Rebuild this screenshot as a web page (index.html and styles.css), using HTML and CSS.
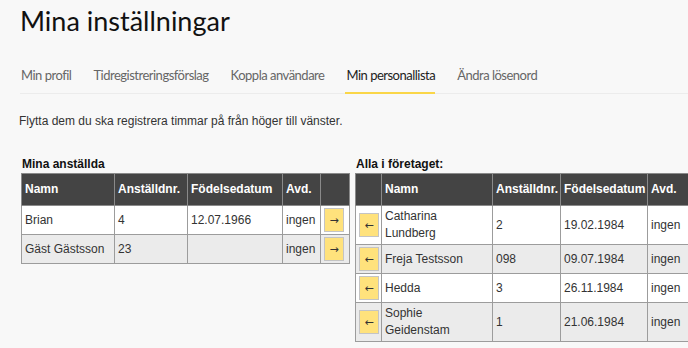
FILE: index.html
```html
<!DOCTYPE html>
<html lang="sv">
<head>
  <meta charset="UTF-8">
  <meta name="viewport" content="width=device-width, initial-scale=1.0">
  <title>Mina inställningar</title>
  <link rel="stylesheet" href="styles.css">
</head>
<body>
  <div class="page">
    <h1>Mina inställningar</h1>

    <nav class="tabs">
      <a href="#">Min profil</a>
      <a href="#">Tidregistreringsförslag</a>
      <a href="#">Koppla användare</a>
      <a href="#" class="active">Min personallista</a>
      <a href="#">Ändra lösenord</a>
    </nav>

    <p class="intro">Flytta dem du ska registrera timmar på från höger till vänster.</p>

    <div class="lists">
      <div class="list mine">
        <h2>Mina anställda</h2>
        <table>
          <colgroup>
            <col class="c-name"><col class="c-nr"><col class="c-date"><col class="c-avd"><col class="c-btn">
          </colgroup>
          <tr>
            <th>Namn</th><th>Anställdnr.</th><th>Födelsedatum</th><th>Avd.</th><th></th>
          </tr>
          <tr>
            <td>Brian</td><td>4</td><td>12.07.1966</td><td>ingen</td>
            <td><button class="move">→</button></td>
          </tr>
          <tr>
            <td>Gäst Gästsson</td><td>23</td><td></td><td>ingen</td>
            <td><button class="move">→</button></td>
          </tr>
        </table>
      </div>

      <div class="list all">
        <h2>Alla i företaget:</h2>
        <table>
          <colgroup>
            <col class="c-btn"><col class="c-name"><col class="c-nr"><col class="c-date"><col class="c-avd">
          </colgroup>
          <tr>
            <th></th><th>Namn</th><th>Anställdnr.</th><th>Födelsedatum</th><th>Avd.</th>
          </tr>
          <tr>
            <td><button class="move">←</button></td>
            <td>Catharina<br>Lundberg</td><td>2</td><td>19.02.1984</td><td>ingen</td>
          </tr>
          <tr>
            <td><button class="move">←</button></td>
            <td>Freja Testsson</td><td>098</td><td>09.07.1984</td><td>ingen</td>
          </tr>
          <tr>
            <td><button class="move">←</button></td>
            <td>Hedda</td><td>3</td><td>26.11.1984</td><td>ingen</td>
          </tr>
          <tr>
            <td><button class="move">←</button></td>
            <td>Sophie<br>Geidenstam</td><td>1</td><td>21.06.1984</td><td>ingen</td>
          </tr>
        </table>
      </div>
    </div>
  </div>
</body>
</html>
```

FILE: styles.css
```css
html, body {
  overflow: hidden;
}

body {
  margin: 0;
  background: #f8f8f8;
  color: #333;
  font-family: "Liberation Sans", Arial, sans-serif;
  font-size: 12px;
}

.page {
  padding: 0 0 0 20px;
}

h1 {
  margin: 4px 0 0;
  font-family: Lato, sans-serif;
  font-weight: 400;
  font-size: 27px;
  line-height: 34px;
  color: #111;
}

.tabs {
  display: flex;
  gap: 21px;
  margin-top: 27px;
  border-bottom: 1px solid #ececec;
}

.tabs a {
  font-family: Lato, sans-serif;
  font-size: 13px;
  letter-spacing: -0.5px;
  line-height: 20px;
  color: #666;
  text-decoration: none;
  padding: 0 0 7px 1px;
  border-bottom: 2px solid transparent;
  margin-bottom: -1px;
}

.tabs a.active {
  color: #222;
  border-bottom-color: #fad648;
}

.intro {
  margin: 19px 0 0 -1px;
  line-height: 17px;
}

.lists {
  display: flex;
  gap: 5px;
  margin-top: 27px;
  margin-left: 1px;
}

.list h2 {
  margin: 0 0 1px;
  font-size: 12px;
  line-height: 15px;
  color: #111;
  padding-left: 1px;
}

table {
  border-collapse: collapse;
  table-layout: fixed;
  line-height: 17px;
}

.mine table { width: 329px; }
.all table { width: 334px; }

th {
  background: #444;
  color: #fff;
  text-align: left;
  padding: 7px 3px;
  border: 1px solid #8a8a8a;
  white-space: nowrap;
}

td {
  padding: 2px 3px;
  border: 1px solid #9c9c9c;
  vertical-align: middle;
  background: #fff;
}

tr:nth-child(odd) td {
  background: #ebebeb;
}

.mine .c-name { width: 93px; }
.mine .c-nr { width: 73px; }
.mine .c-date { width: 95px; }
.mine .c-avd { width: 38px; }
.mine .c-btn { width: 29px; }

.all .c-btn { width: 26px; }
.all .c-name { width: 111px; }
.all .c-nr { width: 68px; }
.all .c-date { width: 87px; }
.all .c-avd { width: 42px; }

.move {
  display: block;
  width: 20px;
  height: 24px;
  padding: 0;
  background: #ffe27c;
  border: 1px solid #c4c4c4;
  font-family: "DejaVu Sans", sans-serif;
  font-size: 11px;
  color: #333;
  cursor: pointer;
}
```
